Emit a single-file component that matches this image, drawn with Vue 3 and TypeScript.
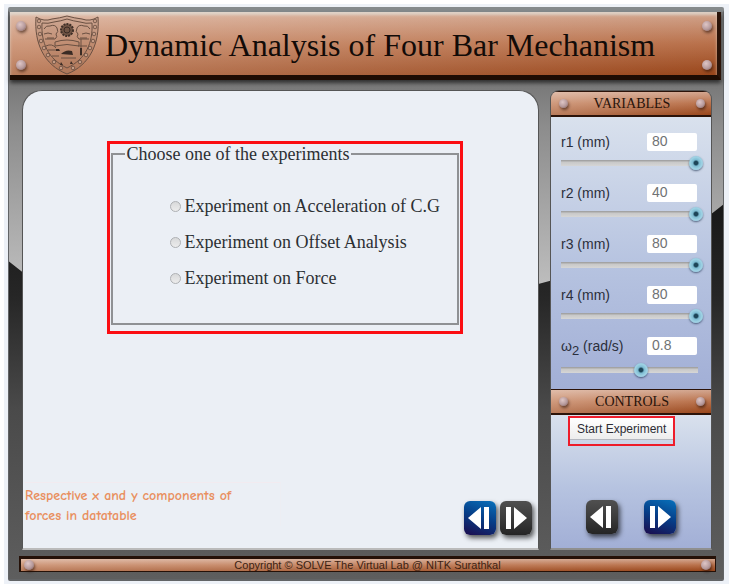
<script setup lang="ts">
import { ref } from 'vue'

interface Variable {
  id: string
  symbol: string
  sub: string
  unit: string
  value: number
  max: number
  step: number
}

const variables = ref<Variable[]>([
  { id: 'r1', symbol: 'r1', sub: '', unit: '(mm)', value: 80, max: 80, step: 1 },
  { id: 'r2', symbol: 'r2', sub: '', unit: '(mm)', value: 40, max: 40, step: 1 },
  { id: 'r3', symbol: 'r3', sub: '', unit: '(mm)', value: 80, max: 80, step: 1 },
  { id: 'r4', symbol: 'r4', sub: '', unit: '(mm)', value: 80, max: 80, step: 1 },
  { id: 'omega', symbol: 'ω', sub: '2', unit: '(rad/s)', value: 0.8, max: 1.4, step: 0.1 },
])

const experiments: string[] = [
  'Experiment on Acceleration of C.G',
  'Experiment on Offset Analysis',
  'Experiment on Force',
]
const chosen = ref<string>('')

// Rivets along the border of the crest
const beads: [number, number][] = [
  [4, 6], [4, 12], [5, 19], [6, 26], [9, 33], [13, 40], [19, 47], [26, 53],
  [60, 6], [60, 12], [59, 19], [58, 26], [55, 33], [51, 40], [45, 47], [38, 53],
]
</script>

<template>
  <div class="page">
    <div class="frame">
      <header class="banner copper">
        <div class="rivets"><i class="screw"></i><i class="screw"></i></div>
        <svg class="crest" viewBox="0 0 64 60" aria-hidden="true">
          <g fill="none" stroke="#6a5042" stroke-width="1">
            <path d="M1 2Q9 7 17 4Q25 3 32 1Q39 3 47 4Q55 7 63 2C65 28 55 50 32 59C9 50-1 28 1 2Z" fill="#8a6a58" fill-opacity=".18" />
            <path d="M7 8Q13 9 19 7Q26 6 32 4Q38 6 45 7Q51 9 57 8C58 28 51 44 32 53C13 44 6 28 7 8Z" />
            <path d="M9 14q2-4 6-3q5-2 7 2q2 4-1 6q2 3-1 5H10M9 19q4-2 8 0M12 23h7" />
            <path d="M55 14q-2-4-6-3q-5-2-7 2q-2 4 1 6q-2 3 1 5H54M55 19q-4-2-8 0M52 23h-7" />
            <path d="M20 27q12-4 24 0v4q-12-3-24 0Z" />
            <path d="M11 31q6-3 10 2M46 24v17M43 31h9M13 35h8M26 43h15M17 41h7" />
          </g>
          <circle cx="32" cy="15" r="6" fill="#705444" stroke="#3f2f27" stroke-width="2" stroke-dasharray="2 1" />
          <circle cx="32" cy="15" r="3" fill="none" stroke="#3a2b24" />
          <path d="M26 39q5-5 11-3l1 4ZM21 34h3l1 2h-4ZM26 47l2 3h-3ZM36 46l2 3h-3ZM45 33h2v7h-2Z" fill="#3a2b24" />
          <circle v-for="(b, i) in beads" :key="i" :cx="b[0]" :cy="b[1]" r="1.8" fill="#c49b84" stroke="#5a4438" stroke-width=".7" />
        </svg>
        <h1>Dynamic Analysis of Four Bar Mechanism</h1>
        <div class="rivets"><i class="screw"></i><i class="screw"></i></div>
      </header>

      <div class="workspace">
        <main class="stage">
          <div class="chooser">
            <fieldset>
              <legend>Choose one of the experiments</legend>
              <label v-for="name in experiments" :key="name">
                <input v-model="chosen" type="radio" name="experiment" :value="name" />
                <span>{{ name }}</span>
              </label>
            </fieldset>
          </div>
          <div class="stage-foot">
            <p>Respective x and y components of forces in datatable</p>
            <div class="steps">
              <button type="button" class="step blue" aria-label="Previous">
                <svg viewBox="0 0 32 34"><path d="M17 6V28L4 17ZM20 6h5v22h-5Z" /></svg>
              </button>
              <button type="button" class="step" aria-label="Next">
                <svg viewBox="0 0 32 34"><path d="M14 6V28L27 17ZM6 6h5v22H6Z" /></svg>
              </button>
            </div>
          </div>
        </main>

        <aside class="side">
          <section class="variables">
            <header class="bar copper"><i class="screw"></i><h2>VARIABLES</h2><i class="screw"></i></header>
            <div class="fields">
              <div v-for="v in variables" :key="v.id" class="field">
                <label :for="v.id">{{ v.symbol }}<sub v-if="v.sub">{{ v.sub }}</sub> {{ v.unit }}</label>
                <input :id="v.id" v-model.number="v.value" type="text" class="value" />
                <input v-model.number="v.value" type="range" min="0" :max="v.max" :step="v.step" :aria-label="v.symbol + v.sub" />
              </div>
            </div>
          </section>
          <section class="controls">
            <header class="bar copper"><i class="screw"></i><h2>CONTROLS</h2><i class="screw"></i></header>
            <div class="control-body">
              <div class="start"><button type="button">Start Experiment</button></div>
              <div class="steps wide">
                <button type="button" class="step" aria-label="Previous experiment">
                  <svg viewBox="0 0 32 34"><path d="M17 6V28L4 17ZM20 6h5v22h-5Z" /></svg>
                </button>
                <button type="button" class="step blue" aria-label="Next experiment">
                  <svg viewBox="0 0 32 34"><path d="M14 6V28L27 17ZM6 6h5v22H6Z" /></svg>
                </button>
              </div>
            </div>
          </section>
        </aside>
      </div>

      <footer class="copper">
        <i class="screw"></i>
        <span>Copyright © SOLVE The Virtual Lab @ NITK Surathkal</span>
        <i class="screw"></i>
      </footer>
    </div>
  </div>
</template>

<style>
body {
  background: #fff;
}
</style>

<style scoped>
* {
  box-sizing: border-box;
}

h1,
h2,
p {
  margin: 0;
  font-weight: 400;
}

.page {
  display: flex;
  min-height: 100vh;
  padding: 7px 9px 5px 8px;
  background: linear-gradient(#edf1f7, #edf1f7) no-repeat 4px 4px / calc(100% - 8px) calc(100% - 6px);
  font-family: "Liberation Sans", Arial, sans-serif;
}

.frame {
  position: relative;
  z-index: 0;
  flex: 1;
  display: flex;
  flex-direction: column;
  padding: 0 3px;
  border: solid #626466;
  border-width: 5px 1px 2px;
  border-top-color: #858a8c;
  border-radius: 2px;
  background: linear-gradient(#777 12%, #8c8c8c 20%, #bdbdbd 48%);
}

/* Dark lower half of the metal frame, cut off along a sloping edge */
.frame::before {
  content: "";
  position: absolute;
  z-index: -1;
  inset: 0;
  background: linear-gradient(#181818 34%, #262626 50%, #4a4a4a 70%, #5e5e5e);
  clip-path: polygon(0 44%, 2% 46%, 40% 56%, 74% 48%, 77% 47%, 98% 36%, 100% 34%, 100% 100%, 0 100%);
}

.copper {
  background:
    linear-gradient(to right, rgba(255, 240, 230, 0.32), rgba(255, 240, 230, 0)),
    linear-gradient(#d2a58e, #b9714b 50%, #99461b);
}

.screw {
  flex: none;
  width: 10px;
  height: 10px;
  border-radius: 50%;
  background: radial-gradient(circle at 40% 35%, #dfc6c6, #b69a9c 55%, #725657);
  box-shadow: 1px 2px 3px rgba(40, 15, 5, 0.6);
}

.banner {
  display: flex;
  align-items: center;
  height: 68px;
  margin: 0 -1px 0 -2px;
  padding: 3px 5px 0 6px;
  border-bottom: 5px solid #1e0c03;
  border-right: 4px solid #2a1308;
  box-shadow: 0 3px 4px rgba(0, 0, 0, 0.6), inset 0 3px 3px rgba(225, 225, 220, 0.7);
}

.rivets {
  display: flex;
  flex-direction: column;
  gap: 29px;
}

.crest {
  width: 64px;
  height: 60px;
  margin-left: 9px;
}

h1 {
  flex: 1;
  padding-left: 6px;
  font: 32px/40px "Liberation Serif", "Times New Roman", serif;
  color: #120b08;
  white-space: nowrap;
}

.workspace {
  flex: 1;
  display: grid;
  grid-template-columns: minmax(0, 1fr) 162px;
  gap: 11px;
  padding: 10px 8px 0 10px;
}

.stage {
  display: flex;
  flex-direction: column;
  justify-content: space-between;
  border: 1px solid #555;
  border-bottom: 2px solid #bbb;
  border-radius: 20px 20px 0 0;
  background: #ebeff5;
}

.chooser {
  align-self: center;
  width: 356px;
  margin: 50px 0 0 8px;
  border: 3px solid #fb0d12;
  padding: 0 1px 6px;
}

fieldset {
  display: flex;
  flex-direction: column;
  gap: 12px;
  min-width: 0;
  margin: 0;
  padding: 30px 12px 33px 57px;
  border: 2px solid #8f9194;
  font: 18px/24px "Liberation Serif", "Times New Roman", serif;
  color: #2c2f33;
}

legend {
  margin-left: -45px;
  padding: 0 2px;
  line-height: 20px;
}

fieldset label {
  display: flex;
  align-items: center;
  gap: 4px;
  white-space: nowrap;
}

fieldset input {
  appearance: none;
  flex: none;
  width: 11px;
  height: 11px;
  margin: 0;
  border: 1px solid #aeb0b3;
  border-radius: 50%;
  background: linear-gradient(#d8d9da, #ececec);
}

fieldset input:checked {
  background: radial-gradient(circle, #333 35%, #e6e6e6 40%);
}

.stage-foot {
  display: flex;
  justify-content: space-between;
  align-items: flex-start;
  padding: 0 6px 13px 2px;
}

.stage-foot p {
  width: 256px;
  padding: 3px 30px 0 0;
  border-top: 1px solid #f2ebf0;
  border-right: 1px solid #edeef3;
  font: 700 14px/20px "Comic Sans MS", "Comic Neue", "Noto Sans", sans-serif;
  color: #e98f60;
}

.steps {
  display: flex;
  gap: 4px;
  padding-top: 19px;
}

.step {
  width: 32px;
  height: 34px;
  padding: 0;
  border: 0;
  border-radius: 6px;
  background: linear-gradient(#505050, #3c3c3c 50%, #252525);
  box-shadow: 2px 3px 5px rgba(0, 0, 0, 0.65);
}

.step.blue {
  background: linear-gradient(200deg, #0871bb, #063c86 50%, #1c0b4c);
}

.step svg {
  display: block;
  width: 100%;
  fill: #fff;
}

.side,
.variables,
.controls {
  display: flex;
  flex-direction: column;
}

.side {
  border: 1px solid #555;
  border-bottom: 2px solid #8f8f8f;
  border-radius: 9px 9px 0 0;
  overflow: hidden;
}

.controls {
  flex: 1;
}

.bar {
  display: flex;
  justify-content: space-between;
  align-items: center;
  height: 26px;
  padding: 0 6px 0 8px;
  border: solid #2c1309;
  border-width: 1px 0 2px;
}

.bar .screw {
  width: 9px;
  height: 9px;
}

h2 {
  font: 14px/20px "Liberation Serif", "Times New Roman", serif;
  color: #27130b;
}

.fields {
  display: flex;
  flex-direction: column;
  gap: 12px;
  padding: 16px 8px 10px 10px;
  background: linear-gradient(#d9e1ed, #b6c3e0 55%, #a2afd6);
}

.field {
  display: grid;
  grid-template-columns: 1fr 50px;
  row-gap: 3px;
  align-items: center;
  font-size: 14px;
  line-height: 18px;
  color: #2b2f3b;
}

.field:last-child {
  row-gap: 6px;
}

.field label {
  white-space: nowrap;
}

sub {
  line-height: 0;
  font-size: 13px;
}

.value {
  width: 50px;
  height: 18px;
  margin: 0 0 0 -6px;
  padding: 0 5px 2px;
  border: 0;
  border-radius: 2px;
  background: #fff;
  font: 14px/16px "Liberation Sans", Arial, sans-serif;
  color: #707274;
}

.field input[type="range"] {
  appearance: none;
  grid-column: 1 / -1;
  width: 100%;
  height: 18px;
  margin: 0;
  background: linear-gradient(#999, #c9c9c9 40%, #d6d6d6) no-repeat 0 50% / calc(100% - 5px) 6px;
}

.field input[type="range"]::-webkit-slider-thumb {
  appearance: none;
  width: 14px;
  height: 14px;
  border-radius: 50%;
  background: radial-gradient(circle, #1d4558 18%, #7dbcd2 32%, #9fd2e4 60%, #76aec6);
  box-shadow: 0 1px 2px rgba(30, 50, 80, 0.7);
}

.control-body {
  flex: 1;
  display: flex;
  flex-direction: column;
  justify-content: space-between;
  padding: 1px 17px 14px;
  background: linear-gradient(#d9e1ed, #b6c3e0 55%, #a2afd6);
}

.start {
  align-self: flex-start;
  border: 2px solid #ee1c2a;
  padding-bottom: 4px;
}

.start button {
  display: block;
  height: 22px;
  padding: 0 7px;
  border: 0;
  border-bottom: 1px solid #b5b8c0;
  background: linear-gradient(#fff, #ededed);
  font: 12px/20px "Liberation Sans", Arial, sans-serif;
  color: #2c2c34;
}

.steps.wide {
  justify-content: center;
  gap: 26px;
}

footer {
  display: flex;
  justify-content: space-between;
  align-items: center;
  height: 16px;
  margin: 6px 4px 7px 7px;
  padding: 0 4px 0 3px;
  border: solid #251108;
  border-width: 3px 1px 1px 2px;
  font-size: 11px;
  line-height: 12px;
  color: #3c1f12;
}
</style>
